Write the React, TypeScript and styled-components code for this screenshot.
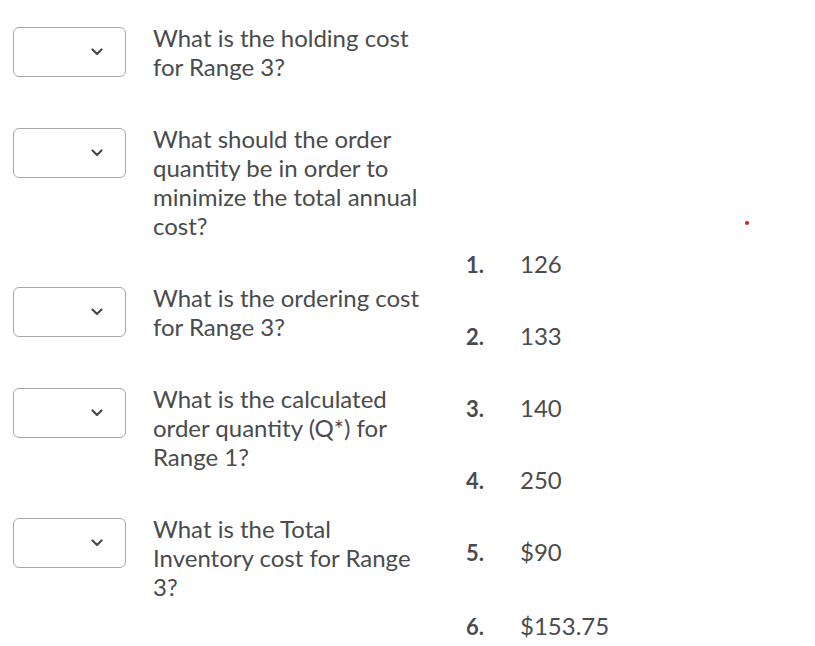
import styled, { createGlobalStyle } from 'styled-components'

const GlobalStyle = createGlobalStyle`
  html, body {
    margin: 0;
    padding: 0;
    background: #ffffff;
  }
  body {
    font-family: Lato, 'Open Sans', sans-serif;
    color: #4a4b4d;
  }
`

const questions = [
  'What is the holding cost for Range 3?',
  'What should the order quantity be in order to minimize the total annual cost?',
  'What is the ordering cost for Range 3?',
  'What is the calculated order quantity (Q*) for Range 1?',
  'What is the Total Inventory cost for Range 3?',
]

const answers = ['126', '133', '140', '250', '$90', '$153.75']

export default function App() {
  return (
    <>
      <GlobalStyle />
      <Page>
        <QuestionList>
          {questions.map((q) => (
            <QuestionRow key={q}>
              <SelectBox>
                <svg width="12" height="8" viewBox="0 0 12 8">
                  <path
                    d="M1.5 1.5 L6 6 L10.5 1.5"
                    fill="none"
                    stroke="#4a4b4d"
                    strokeWidth="2.2"
                    strokeLinecap="round"
                    strokeLinejoin="round"
                  />
                </svg>
              </SelectBox>
              <QuestionText>{q}</QuestionText>
            </QuestionRow>
          ))}
        </QuestionList>
        <AnswerList>
          {answers.map((a, i) => (
            <AnswerItem key={a}>
              <AnswerNum>{i + 1}.</AnswerNum>
              <AnswerValue>{a}</AnswerValue>
            </AnswerItem>
          ))}
        </AnswerList>
        <RedDot />
      </Page>
    </>
  )
}

const Page = styled.div`
  position: relative;
  width: 815px;
  height: 646px;
  display: flex;
  padding: 23px 0 0 13px;
  box-sizing: border-box;
`

const QuestionList = styled.div`
  display: flex;
  flex-direction: column;
  gap: 43px;
  width: 440px;
`

const QuestionRow = styled.div`
  display: flex;
  align-items: flex-start;
`

const SelectBox = styled.div`
  width: 113px;
  height: 50px;
  margin-top: 4px;
  box-sizing: border-box;
  border: 1px solid #a8a8a8;
  border-radius: 6px;
  background: #fff;
  display: flex;
  align-items: center;
  justify-content: flex-end;
  padding-right: 22px;
  flex-shrink: 0;
`

const QuestionText = styled.div`
  margin-left: 27px;
  width: 280px;
  font-size: 24px;
  line-height: 29px;
`

const AnswerList = styled.div`
  display: flex;
  flex-direction: column;
  gap: 43px;
  margin-top: 226px;
  margin-left: 13px;
`

const AnswerItem = styled.div`
  display: flex;
  align-items: baseline;
  height: 29px;

  &:last-child {
    margin-top: 2px;
  }
`

const AnswerNum = styled.span`
  width: 54px;
  font-size: 22px;
  font-weight: 700;
  line-height: 29px;
`

const AnswerValue = styled.span`
  font-size: 24px;
  line-height: 29px;
`

const RedDot = styled.div`
  position: absolute;
  left: 745px;
  top: 221px;
  width: 4px;
  height: 4px;
  border-radius: 50%;
  background: #d91f1f;
`
